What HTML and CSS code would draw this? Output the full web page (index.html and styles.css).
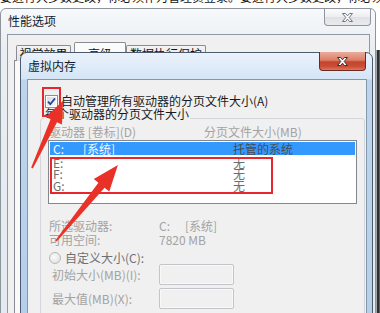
FILE: index.html
```html
<!DOCTYPE html>
<html lang="zh-CN">
<head>
<meta charset="utf-8">
<title>虚拟内存</title>
<link rel="stylesheet" href="styles.css">
</head>
<body>
<div class="desk">
  <div class="bgtext">要进行大多数更改，你必须作为管理员登录。要进行大多数更改，你必须作为管理员登录。</div>
  <div class="strip"></div>

  <section class="win outer">
    <header class="bar">
      <span class="title">性能选项</span>
      <span class="close grey">
        <svg width="11" height="9" viewBox="0 0 11 9"><polygon points="0.5,0.5 3.5,0.5 5.5,2.8 7.5,0.5 10.5,0.5 7.2,4.5 10.5,8.5 7.5,8.5 5.5,6.2 3.5,8.5 0.5,8.5 3.8,4.5" fill="#fafafa" stroke="#6f7781" stroke-width="1" stroke-linejoin="round"/></svg>
      </span>
    </header>
    <div class="oclient">
      <div class="tabs">
        <span class="tab t1">视觉效果</span><span class="tab sel">高级</span><span class="tab t3">数据执行保护</span>
      </div>
      <div class="panel"></div>
    </div>
  </section>

  <section class="win inner">
    <header class="bar">
      <span class="title">虚拟内存</span>
      <span class="close red">
        <svg width="11" height="9" viewBox="0 0 11 9"><polygon points="0.5,0.5 3.5,0.5 5.5,2.8 7.5,0.5 10.5,0.5 7.2,4.5 10.5,8.5 7.5,8.5 5.5,6.2 3.5,8.5 0.5,8.5 3.8,4.5" fill="#ffffff" stroke="#3a3030" stroke-width="1" stroke-linejoin="round"/></svg>
      </span>
    </header>
    <div class="iclient">
      <div class="check">
        <svg class="box" width="13" height="13" viewBox="0 0 13 13">
          <defs><linearGradient id="cb" x1="0" y1="0" x2="1" y2="1"><stop offset="0" stop-color="#d7dce2"/><stop offset="1" stop-color="#f7f8f9"/></linearGradient></defs>
          <rect x="0.5" y="0.5" width="12" height="12" fill="#fff" stroke="#8f8f8f"/>
          <rect x="2" y="2" width="9" height="9" fill="url(#cb)"/>
          <path d="M3 6.6 L5.3 9.2 L10 3.4" fill="none" stroke="#2a4290" stroke-width="1.8"/>
        </svg>
        <span>自动管理所有驱动器的分页文件大小(A)</span>
      </div>
      <div class="group">
        <span class="caption">每个驱动器的分页文件大小</span>
        <div class="heads"><span>驱动器 [卷标](D)</span><span>分页文件大小(MB)</span></div>
        <div class="list">
          <div class="row sel"><span>C:</span><span>[系统]</span><span class="sz">托管的系统</span></div>
          <div class="row"><span>E:</span><span></span><span>无</span></div>
          <div class="row"><span>F:</span><span></span><span>无</span></div>
          <div class="row"><span>G:</span><span></span><span>无</span></div>
        </div>
        <div class="info">
          <span>所选驱动器:</span><span class="val"><span class="drv">C:</span>[系统]</span>
          <span>可用空间:</span><span>7820 MB</span>
        </div>
        <div class="radio"><span class="dot"></span><span>自定义大小(C):</span></div>
        <div class="field"><span class="lbl">初始大小(MB)(I):</span><span class="input"></span></div>
        <div class="field f2"><span class="lbl">最大值(MB)(X):</span><span class="input"></span></div>
      </div>
    </div>
  </section>

  <div class="mark m1"></div>
  <div class="mark m2"></div>
  <svg class="arrows" width="380" height="313" viewBox="0 0 380 313">
    <polygon transform="translate(32,168) rotate(-65.2)" points="0,-0.9 52,-3.5 52,-9 74,0 52,9 52,3.5 0,0.9" fill="#ea3128"/>
    <polygon transform="translate(56,241) rotate(-50.8)" points="0,-0.9 72,-4 72,-10 98,0 72,10 72,4 0,0.9" fill="#ea3128"/>
  </svg>
</div>
</body>
</html>
```

FILE: styles.css
```css
* { box-sizing: border-box; margin: 0; padding: 0; }
html, body { width: 380px; height: 313px; overflow: hidden; }
body {
  background: #ffffff;
  font-family: "Noto Sans CJK SC", "Noto Sans", sans-serif;
  font-size: 12px;
  color: #1a1a1a;
}
.desk { position: relative; width: 380px; height: 313px; overflow: hidden; }

.bgtext {
  margin-top: -10px;
  line-height: 14px;
  white-space: nowrap;
  color: #151515;
}

.strip {
  position: absolute;
  left: 375px; top: 50px;
  width: 5px; height: 263px;
  background: linear-gradient(to right, #6f7377 0 1px, #a4a7aa 1px 2px, #2e3033 2px 4px, #5a5c5e 4px);
}

/* windows */
.win { position: absolute; display: flex; flex-direction: column; }
.bar { display: flex; justify-content: space-between; align-items: flex-start; flex: none; }
.title { line-height: 14px; color: #141a2e; }

.close {
  display: flex; align-items: center; justify-content: center;
  width: 47px;
  border: 1px solid #8e959e;
  border-top: none;
  border-radius: 0 0 4px 4px;
}
.grey {
  height: 17px;
  background: linear-gradient(#fbfbfc, #eceef0 48%, #dfe1e4 52%, #eaebed);
}
.red {
  height: 19px;
  margin-top: -1px;
  border-color: #6e2a20;
  background: linear-gradient(#e9ab9c, #dc8069 45%, #c3442b 55%, #c94e35 80%, #dd765d);
}

/* outer window */
.outer {
  left: 0; top: 8px;
  width: 376px; height: 330px;
  border: 1px solid #8d949c;
  border-radius: 6px 6px 0 0;
  background: linear-gradient(#f7f9fb, #e9eef3 40px, #e4e9ef);
}
.outer .bar { height: 25px; padding-left: 7px; padding-right: 4px; }
.outer .title { padding-top: 5px; }

.oclient {
  flex: 1;
  margin: 0 5px 0 6px;
  border: 1px solid #8f9aa6;
  background: #f0f0f0;
  padding: 7px 0 0 6px;
}
.tabs { display: flex; align-items: flex-start; margin-left: 2px; }
.tab {
  margin-top: 3px;
  height: 16px;
  line-height: 15px;
  text-align: center;
  border: 1px solid #898c95;
  border-bottom: none;
  border-radius: 2px 2px 0 0;
  background: linear-gradient(#f4f4f4, #e3e3e3);
  color: #111;
}
.t1 { width: 55px; margin-right: 3px; }
.tab.sel { width: 52px; margin-top: 0; height: 19px; line-height: 21px; background: #fbfbfb; }
.t3 { width: 80px; }
.panel {
  height: 300px;
  margin-top: -1px;
  border: 1px solid #898c95;
  background: #fafafa;
}

/* inner window */
.inner {
  left: 20px; top: 52px;
  width: 353px; height: 280px;
  border: 1px solid #4b5b6d;
  border-radius: 7px 7px 0 0;
  background: linear-gradient(#eaf2fb, #d4e5f6 26px, #bdd4ec 27px, #b6cfe9);
  padding: 0 5px 0 6px;
}
.inner .bar { height: 26px; padding-left: 1px; padding-right: 1px; }
.inner .title { padding-top: 6px; }

.iclient {
  flex: 1;
  border: 1px solid #8597ab;
  background: #f0f0f0;
  padding: 14px 1px 0 12px;
}

.check {
  display: flex; align-items: center; gap: 3px;
  height: 14px; line-height: 14px;
  margin-left: 5px;
}
.box { flex: none; }

.group {
  position: relative;
  margin-top: 10px;
  height: 220px;
  border: 1px solid #d3d7db;
  border-radius: 3px;
  padding: 6px 0 0 7px;
}
.caption {
  position: absolute;
  left: 3px; top: -11px;
  line-height: 12px;
  padding: 0 1px;
  background: #f0f0f0;
}
.heads {
  display: grid;
  grid-template-columns: 155px auto;
  margin-left: 1px;
  line-height: 14px;
  color: #a3a3a3;
}
.list {
  margin-top: 1px;
  width: 309px; height: 64px;
  border: 1px solid #828790;
  background: #ffffff;
  padding: 1px;
}
.row {
  display: grid;
  grid-template-columns: 30px 150px auto;
  padding-left: 3px;
  height: 11.5px;
  line-height: 11.5px;
  color: #6d6d6d;
}
.row.sel {
  height: 13px; line-height: 13px;
  background: #3399ff;
  color: #f4f8ff;
}
.row.sel .sz { color: #4c4c4c; }
.row.sel + .row { margin-top: 1.5px; }

.info {
  margin-top: 15px;
  margin-left: 1px;
  display: grid;
  grid-template-columns: 110px auto;
  line-height: 14px;
  color: #a3a3a3;
}
.drv { display: inline-block; width: 26px; }

.radio {
  margin-top: 5px;
  height: 12px;
  display: flex; align-items: center; gap: 4px;
  color: #707070;
  line-height: 12px;
}
.dot {
  flex: none;
  width: 12px; height: 12px;
  margin-left: 1px;
  border-radius: 50%;
  border: 1px solid #b9b9b9;
  background: radial-gradient(circle at 40% 40%, #fbfbfb, #dcdcdc);
}

.field { display: flex; align-items: center; height: 21px; }
.f2 { margin-top: 3px; }
.lbl { width: 107px; margin-left: 4px; color: #a3a3a3; line-height: 14px; }
.input {
  width: 75px; height: 21px;
  border: 1px solid #c2c5c9;
  border-radius: 2px;
  background: #f0f0f0;
  box-shadow: inset 0 0 0 1px #f8f8f8;
}

/* annotations */
.mark { position: absolute; border: 2px solid #e8262b; }
.m1 { left: 42px; top: 87px; width: 19px; height: 30px; }
.m2 { left: 50px; top: 157px; width: 223px; height: 37px; }
.arrows { position: absolute; left: 0; top: 0; pointer-events: none; }
```
